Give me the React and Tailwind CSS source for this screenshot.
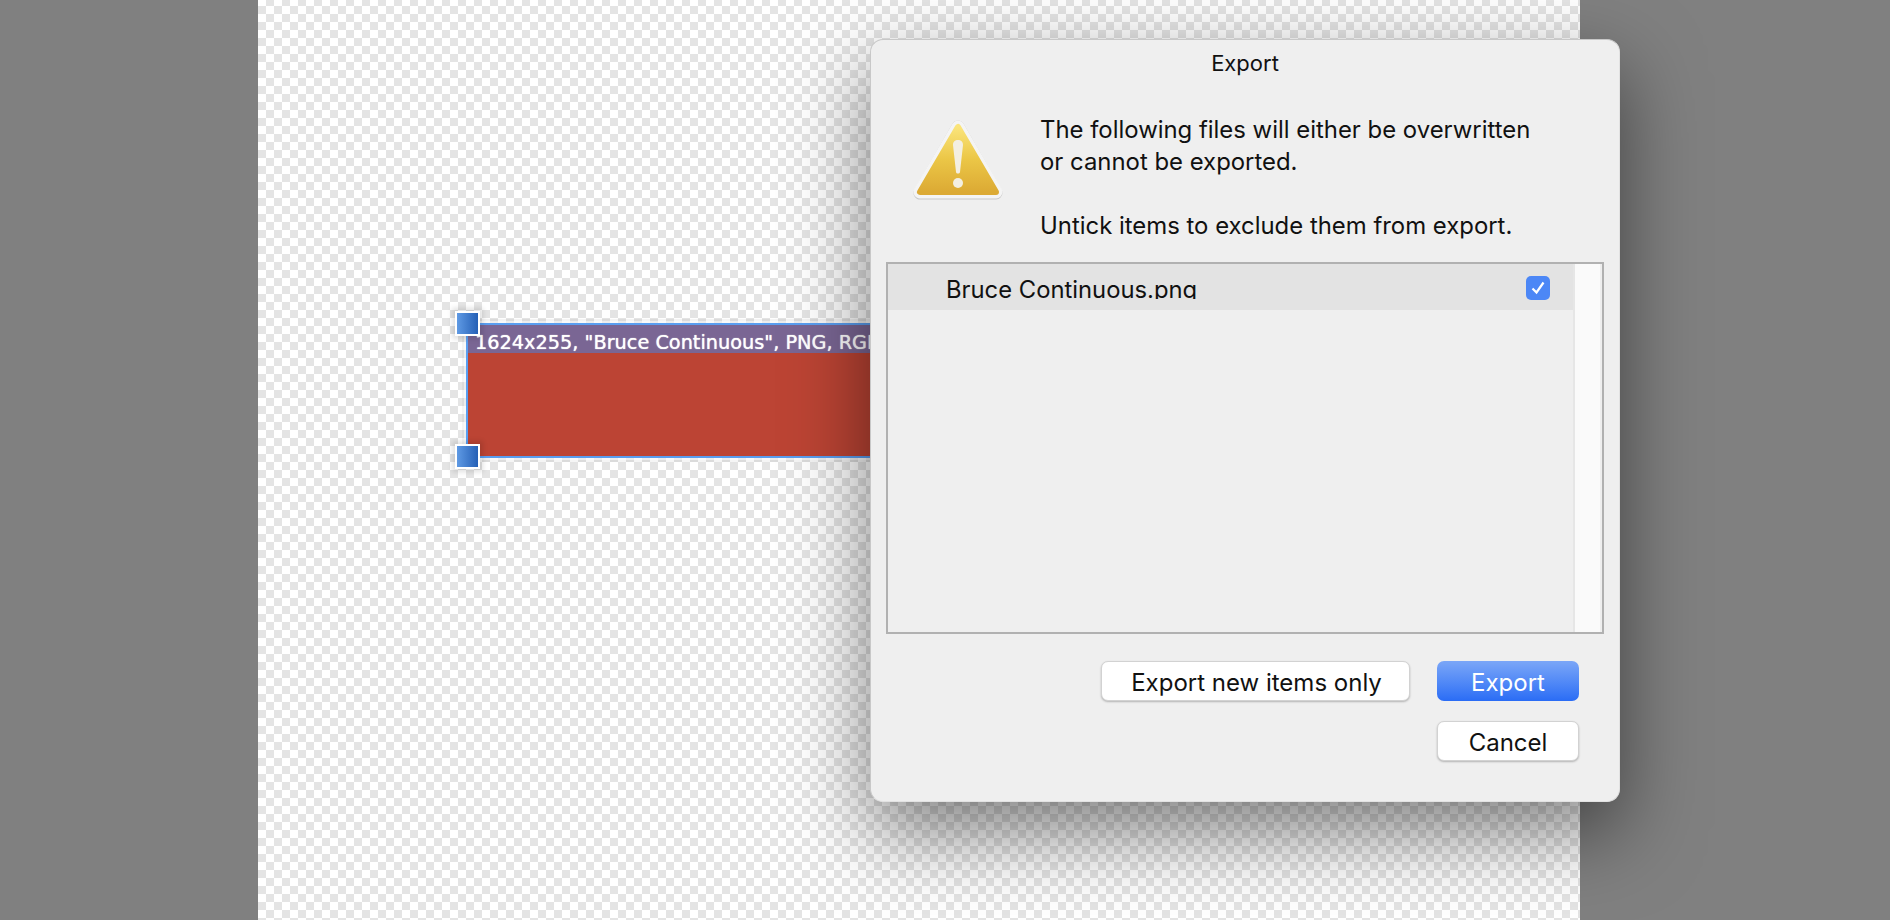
const sans = "font-['Inter','Noto_Sans',sans-serif]";

function WarningIcon() {
  return (
    <svg width="90" height="82" viewBox="0 0 90 82" className="mt-[6px] shrink-0">
      <defs>
        <linearGradient id="warn" x1="0" y1="0" x2="0" y2="1">
          <stop offset="0" stopColor="#fae47a" />
          <stop offset="0.5" stopColor="#ebc646" />
          <stop offset="1" stopColor="#dcaa34" />
        </linearGradient>
      </defs>
      <polygon points="45,7 7,73 83,73" fill="#c9c9c9" stroke="#c9c9c9" strokeWidth="13" strokeLinejoin="round" />
      <polygon points="45,7 7,72 83,72" fill="#f4f4f4" stroke="#f4f4f4" strokeWidth="13" strokeLinejoin="round" />
      <polygon points="45,7 7,72 83,72" fill="url(#warn)" stroke="url(#warn)" strokeWidth="6" strokeLinejoin="round" />
      <path d="M40 25 C40 21.500 42 20 45 20 C48 20 50 21.500 50 25 L47 52 C46.800 54 43.200 54 43 52 Z" fill="#f3efe2" />
      <circle cx="45" cy="63" r="5" fill="#f3efe2" />
    </svg>
  );
}

function Handle({ className }) {
  return (
    <div className={`absolute left-[-13px] w-[25px] h-[25px] border-2 border-white bg-gradient-to-r from-[#5f9ae4] to-[#2560b6] shadow-[0_0_5px_3px_rgba(0,0,0,0.12)] ${className}`} />
  );
}

export default function App() {
  return (
    <div className="relative h-[920px] w-[1890px] overflow-hidden bg-[#808080]">
      <div className="relative ml-[258px] h-[920px] w-[1322px] bg-white bg-[conic-gradient(#e4e4e4_25%,#ffffff_25%_50%,#e4e4e4_50%_75%,#ffffff_75%)] bg-[length:16px_16px] bg-[position:0px_-2px]">
        <div className="absolute left-[208px] top-[323px] h-[135px] w-[620px] border-2 border-[#5a9ef0] bg-[#bc4434] shadow-[0_0_0_2px_rgba(255,255,255,0.5),0_0_0_4px_rgba(0,0,0,0.04)]">
          <div className="h-[28px] overflow-hidden whitespace-nowrap bg-[#7a6694] pl-[7px] font-['DejaVu_Sans',sans-serif] text-[19.300px] leading-[36px] text-white [text-shadow:0_0_1px_#ffffff]">
            1624x255, "Bruce Continuous", PNG, RGB
          </div>
          <Handle className="top-[-14px]" />
          <Handle className="top-[119px]" />
        </div>
      </div>

      <div className={`absolute left-[870px] top-[39px] flex h-[763px] w-[750px] flex-col rounded-[13px] border border-[#c8c8c8] border-b-[#e2e2e2] border-r-[#e2e2e2] bg-[#efefef] px-[15px] text-[#111111] shadow-[0_30px_80px_rgba(0,0,0,0.5)] ${sans}`}>
        <div className="flex h-[46px] shrink-0 items-center justify-center text-[22px]">Export</div>
        <div className="flex pl-[27px] pt-[28px]">
          <WarningIcon />
          <div className="ml-[37px] text-[23.900px] leading-[32px]">
            <p>The following files will either be overwritten</p>
            <p>or cannot be exported.</p>
            <p className="mt-[32px]">Untick items to exclude them from export.</p>
          </div>
        </div>
        <div className="mt-[20px] flex h-[372px] shrink-0 border-2 border-[#b1b1b1] bg-[#efefef]">
          <div className="flex-1">
            <div className="flex h-[46px] items-start bg-[#e3e3e3] pl-[58px] pr-[23px]">
              <div className="mt-[11px] h-[24px] flex-1 overflow-hidden text-[23.800px] leading-[30px]">Bruce Continuous.png</div>
              <div className="mt-[12px] flex h-[24px] w-[24px] items-center justify-center rounded-[5px] bg-[#4c87f6]">
                <svg width="18" height="18" viewBox="0 0 18 18">
                  <path d="M3.500 9.500 L7.500 13.500 L14.500 3.500" fill="none" stroke="#ffffff" strokeWidth="2.200" />
                </svg>
              </div>
            </div>
          </div>
          <div className="w-[29px] border-l-2 border-r-2 border-[#e6e6e6] border-r-[#efefef] bg-[#fafafa]" />
        </div>
        <div className="mt-[27px] flex justify-end gap-[27px] pr-[25px]">
          <button className="h-[40px] w-[309px] rounded-[7px] border border-[#d2d2d2] bg-white pl-[2px] pt-[4px] text-[24px] leading-[32px] shadow-[0_1px_2px_rgba(0,0,0,0.25)]">
            Export new items only
          </button>
          <button className="h-[40px] w-[142px] rounded-[7px] bg-gradient-to-b from-[#7ba6f7] to-[#2a6cf5] pt-[4px] text-[24px] leading-[32px] text-white">
            Export
          </button>
        </div>
        <div className="mt-[20px] flex justify-end pr-[25px]">
          <button className="h-[40px] w-[142px] rounded-[7px] border border-[#d2d2d2] bg-white pt-[4px] text-[24px] leading-[32px] shadow-[0_1px_2px_rgba(0,0,0,0.25)]">
            Cancel
          </button>
        </div>
      </div>
    </div>
  );
}
